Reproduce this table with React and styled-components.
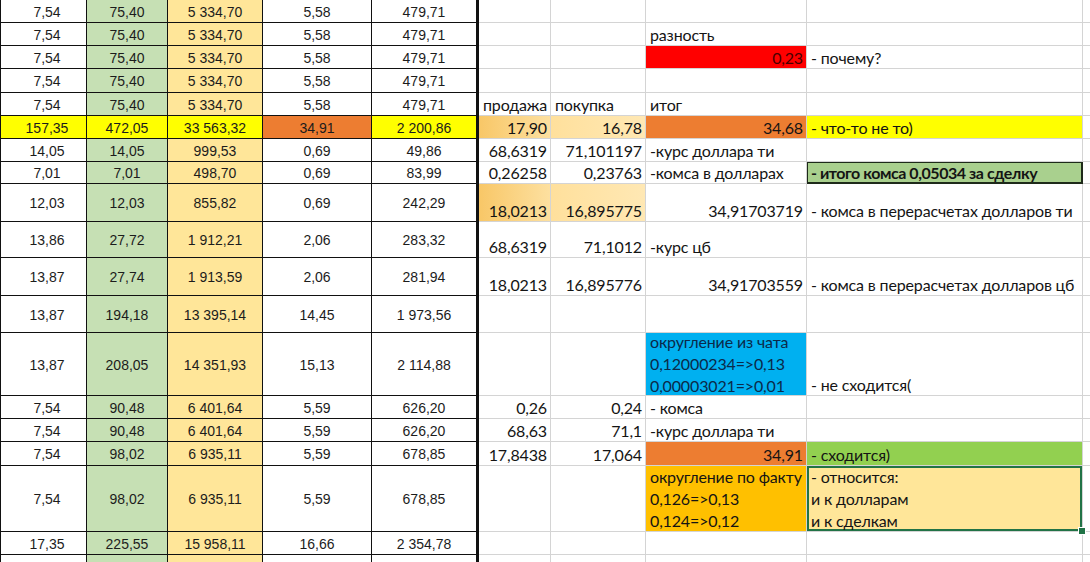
import styled, { createGlobalStyle } from "styled-components";

const GlobalStyle = createGlobalStyle`
  html, body {
    margin: 0;
    padding: 0;
    background: #ffffff;
  }
`;

const COLS = "87px 81px 95px 109px 107px 72px 95px 161px 276px 1fr";

const LEFT_FILL = [null, "#c6e0b4", "#ffe699", null, null];

const GOLD_A = "linear-gradient(to right, #f8c767, #fde0a0)";
const GOLD_B = "linear-gradient(to right, #ffe09c, #ffe8b4)";

const rows = [
  { h: 23, left: ["7,54", "75,40", "5 334,70", "5,58", "479,71"] },
  { h: 23, left: ["7,54", "75,40", "5 334,70", "5,58", "479,71"], right: [null, null, { t: "разность" }] },
  {
    h: 23,
    left: ["7,54", "75,40", "5 334,70", "5,58", "479,71"],
    right: [null, null, { t: "0,23", bg: "#ff0000", num: true, color: "#4a0000" }, { t: "- почему?" }],
  },
  { h: 24, left: ["7,54", "75,40", "5 334,70", "5,58", "479,71"] },
  {
    h: 23,
    left: ["7,54", "75,40", "5 334,70", "5,58", "479,71"],
    right: [{ t: "продажа" }, { t: "покупка" }, { t: "итог" }],
  },
  {
    h: 23,
    left: ["157,35", "472,05", "33 563,32", "34,91", "2 200,86"],
    leftFill: ["#ffff00", "#ffff00", "#ffff00", "#ed7d31", "#ffff00"],
    right: [
      { t: "17,90", bg: GOLD_A, num: true },
      { t: "16,78", bg: GOLD_B, num: true },
      { t: "34,68", bg: "#ed7d31", num: true },
      { t: "- что-то не то)", bg: "#ffff00" },
    ],
  },
  {
    h: 23,
    left: ["14,05", "14,05", "999,53", "0,69", "49,86"],
    right: [{ t: "68,6319", num: true }, { t: "71,101197", num: true }, { t: "-курс доллара ти" }],
  },
  {
    h: 22,
    left: ["7,01", "7,01", "498,70", "0,69", "83,99"],
    right: [
      { t: "0,26258", num: true },
      { t: "0,23763", num: true },
      { t: "-комса в долларах" },
      { t: "- итого комса 0,05034 за сделку", bg: "#a9d08e", bold: true, boxed: true },
    ],
  },
  {
    h: 38,
    left: ["12,03", "12,03", "855,82", "0,69", "242,29"],
    right: [
      { t: "18,0213", bg: GOLD_A, num: true },
      { t: "16,895775", bg: GOLD_B, num: true },
      { t: "34,91703719", num: true },
      { t: "- комса в перерасчетах долларов ти" },
    ],
  },
  {
    h: 36,
    left: ["13,86", "27,72", "1 912,21", "2,06", "283,32"],
    right: [{ t: "68,6319", num: true }, { t: "71,1012", num: true }, { t: "-курс цб" }],
  },
  {
    h: 38,
    left: ["13,87", "27,74", "1 913,59", "2,06", "281,94"],
    right: [
      { t: "18,0213", num: true },
      { t: "16,895776", num: true },
      { t: "34,91703559", num: true },
      { t: "- комса в перерасчетах долларов цб" },
    ],
  },
  { h: 37, left: ["13,87", "194,18", "13 395,14", "14,45", "1 973,56"] },
  {
    h: 63,
    left: ["13,87", "208,05", "14 351,93", "15,13", "2 114,88"],
    right: [
      null,
      null,
      {
        lines: ["округление из чата", "0,12000234=>0,13", "0,00003021=>0,01"],
        bg: "#00b0f0",
        color: "#0b2a4a",
        lh: 22,
      },
      { t: "- не сходится(" },
    ],
  },
  {
    h: 23,
    left: ["7,54", "90,48", "6 401,64", "5,59", "626,20"],
    right: [{ t: "0,26", num: true }, { t: "0,24", num: true }, { t: "- комса" }],
  },
  {
    h: 23,
    left: ["7,54", "90,48", "6 401,64", "5,59", "626,20"],
    right: [{ t: "68,63", num: true }, { t: "71,1", num: true }, { t: "-курс доллара ти" }],
  },
  {
    h: 24,
    left: ["7,54", "98,02", "6 935,11", "5,59", "678,85"],
    right: [
      { t: "17,8438", num: true },
      { t: "17,064", num: true },
      { t: "34,91", bg: "#ed7d31", num: true },
      { t: "- сходится)", bg: "#92d050" },
    ],
  },
  {
    h: 66,
    left: ["7,54", "98,02", "6 935,11", "5,59", "678,85"],
    right: [
      null,
      null,
      { lines: ["округление по факту", "0,126=>0,13", "0,124=>0,12"], bg: "#ffc000", lh: 22 },
      { lines: ["- относится:", "и к долларам", "и к сделкам"], bg: "#ffe699", selected: true, lh: 22 },
    ],
  },
  { h: 23, left: ["17,35", "225,55", "15 958,11", "16,66", "2 354,78"] },
  { h: 23, left: ["", "", "", "", ""] },
];

export default function App() {
  return (
    <>
      <GlobalStyle />
      <Sheet>
        {rows.map((row, i) => (
          <Row key={i} $h={row.h}>
            {row.left.map((v, j) => (
              <LeftCell
                key={j}
                $first={j === 0}
                $last={j === 4}
                $bg={(row.leftFill && row.leftFill[j]) || LEFT_FILL[j]}
              >
                {v}
              </LeftCell>
            ))}
            {[0, 1, 2, 3, 4].map((j) => {
              const c = (row.right && row.right[j]) || {};
              return (
                <RightCell
                  key={j}
                  $bg={c.bg}
                  $num={c.num}
                  $bold={c.bold}
                  $boxed={c.boxed}
                  $selected={c.selected}
                  $color={c.color}
                  $multi={!!c.lines}
                >
                  {c.lines ? c.lines.map((l, k) => <Line key={k} $lh={c.lh}>{l}</Line>) : c.t}
                  {c.selected && <FillHandle />}
                </RightCell>
              );
            })}
          </Row>
        ))}
      </Sheet>
    </>
  );
}

const Sheet = styled.div`
  width: 1090px;
  height: 562px;
  overflow: hidden;
  background: #ffffff;
`;

const Row = styled.div`
  display: grid;
  grid-template-columns: ${COLS};
  grid-template-rows: ${(p) => p.$h}px;
  height: ${(p) => p.$h}px;
`;

const LeftCell = styled.div`
  box-sizing: border-box;
  min-height: 0;
  display: flex;
  align-items: center;
  justify-content: center;
  background: ${(p) => p.$bg || "#ffffff"};
  border-bottom: 1px solid #111;
  border-right: ${(p) => (p.$last ? "3px" : "1px")} solid #111;
  border-left: ${(p) => (p.$first ? "1px solid #111" : "none")};
  font-family: "Liberation Sans", Arial, sans-serif;
  font-size: 14px;
  color: #1c1c1c;
  white-space: nowrap;
  padding-top: 1px;
  padding-left: ${(p) => (p.$first ? "7px" : "0")};
`;

const RightCell = styled.div`
  position: relative;
  box-sizing: border-box;
  min-height: 0;
  display: flex;
  flex-direction: column;
  justify-content: ${(p) => (p.$multi ? "center" : "flex-end")};
  align-items: ${(p) => (p.$num ? "flex-end" : "flex-start")};
  padding: 0 3px 0 4px;
  background: ${(p) => p.$bg || "#ffffff"};
  border-bottom: 1px solid #d4d4d4;
  border-right: 1px solid #d4d4d4;
  font-family: Lato, "Open Sans", sans-serif;
  font-size: 16px;
  line-height: 21px;
  font-weight: ${(p) => (p.$bold ? 700 : 400)};
  letter-spacing: ${(p) => (p.$bold ? "-0.45px" : "-0.15px")};
  color: ${(p) => p.$color || "#141414"};
  white-space: nowrap;
  ${(p) => p.$boxed && "box-shadow: inset 0 0 0 1px #1e2a1a; border-color: #1e2a1a;"}
  ${(p) => p.$selected && "box-shadow: inset 0 0 0 2px #217346;"}
`;

const Line = styled.div`
  line-height: ${(p) => p.$lh || 22}px;
`;

const FillHandle = styled.span`
  position: absolute;
  right: -4px;
  bottom: -4px;
  width: 6px;
  height: 6px;
  background: #217346;
  border: 1px solid #ffffff;
  z-index: 2;
`;
